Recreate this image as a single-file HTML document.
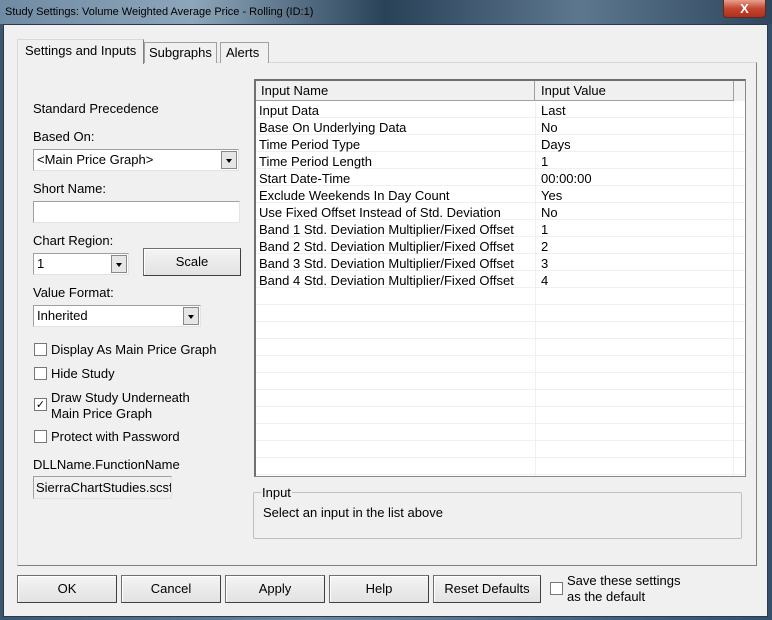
<!DOCTYPE html><html><head><style>
*{box-sizing:border-box;margin:0;padding:0}
body{width:772px;height:620px;overflow:hidden;position:relative;font:13px "Liberation Sans",sans-serif;color:#000;background:linear-gradient(90deg,#3c5670 0%,#6d879f 40%,#4d6884 70%,#34506c 100%)}
.a{position:absolute}
.t{position:absolute;white-space:nowrap;line-height:16px}
.title{left:0;top:0;width:772px;height:24px;background:linear-gradient(90deg,#6f8aa3,#8ea6ba 25%,#2a4258 50%,#5d778f 75%,#2e475f 100%);}
.client{left:3px;top:24px;width:765px;height:593px;background:#f0f0f0;border:1px solid #2a3a4a}
.btn{position:absolute;background:linear-gradient(#f4f4f4,#e2e2e2);border:1px solid #707070;border-right-color:#404040;border-bottom-color:#404040;text-align:center;line-height:25px;box-shadow:inset 1px 1px 0 #fff}
.edit{position:absolute;background:#fff;border:1px solid #a0a0a0;border-right-color:#e3e3e3;border-bottom-color:#e3e3e3;padding-left:3px;line-height:19px}
.dd{position:absolute;right:1px;top:1px;width:16px;bottom:1px;background:#e6e6e6;border:1px solid #888;}
.dd:after{content:"";position:absolute;left:4px;top:7px;border:3.5px solid transparent;border-top:4px solid #000}
.cb{position:absolute;width:13px;height:13px;background:#fff;border:1px solid #777;}
</style></head><body>
<div class="a title"></div>
<div class="t" style="left:5px;top:4px;font-size:11px;color:#000">Study Settings: Volume Weighted Average Price - Rolling (ID:1)</div>
<div class="a" style="left:723px;top:0;width:43px;height:18px;background:linear-gradient(#e8a090,#c4462e 50%,#b0301c);border:1px solid #5a2a24;border-top:none;border-radius:0 0 4px 4px;color:#fff;text-align:center;font:bold 13px/17px 'Liberation Sans'">X</div>
<div class="a client"></div>
<!-- tab panel -->
<div class="a" style="left:17px;top:62px;width:740px;height:504px;border:1px solid #898c95;border-top-color:#d9d9d9;border-left-color:#d9d9d9;border-right:1px solid #808080;border-bottom:1px solid #808080"></div>
<div class="a" style="left:144px;top:42px;width:73px;height:21px;border:1px solid #a0a0a0;border-bottom:none;background:#f0f0f0"></div>
<div class="t" style="left:149px;top:45px">Subgraphs</div>
<div class="a" style="left:220px;top:42px;width:49px;height:21px;border:1px solid #a0a0a0;border-bottom:none;background:#f0f0f0"></div>
<div class="t" style="left:226px;top:45px">Alerts</div>
<div class="a" style="left:17px;top:39px;width:127px;height:25px;border:1px solid #d9d9d9;border-right:1px solid #808080;border-bottom:none;background:#f0f0f0"></div>
<div class="t" style="left:25px;top:43px">Settings and Inputs</div>
<!-- left -->
<div class="t" style="left:33px;top:101px">Standard Precedence</div>
<div class="t" style="left:33px;top:129px">Based On:</div>
<div class="edit" style="left:33px;top:149px;width:206px;height:22px">&lt;Main Price Graph&gt;<div class="dd"></div></div>
<div class="t" style="left:33px;top:181px">Short Name:</div>
<div class="edit" style="left:33px;top:201px;width:207px;height:22px"></div>
<div class="t" style="left:33px;top:233px">Chart Region:</div>
<div class="edit" style="left:33px;top:253px;width:96px;height:22px">1<div class="dd"></div></div>
<div class="btn" style="left:143px;top:248px;width:98px;height:28px">Scale</div>
<div class="t" style="left:33px;top:285px">Value Format:</div>
<div class="edit" style="left:33px;top:305px;width:168px;height:22px">Inherited<div class="dd"></div></div>
<div class="cb" style="left:34px;top:343px"></div><div class="t" style="left:51px;top:342px">Display As Main Price Graph</div>
<div class="cb" style="left:34px;top:367px"></div><div class="t" style="left:51px;top:366px">Hide Study</div>
<div class="cb" style="left:34px;top:398px;font:bold 11px/11px 'DejaVu Sans';text-align:center">✓</div><div class="t" style="left:51px;top:390px">Draw Study Underneath</div><div class="t" style="left:51px;top:406px">Main Price Graph</div>
<div class="cb" style="left:34px;top:430px"></div><div class="t" style="left:51px;top:429px">Protect with Password</div>
<div class="t" style="left:33px;top:457px">DLLName.FunctionName</div>
<div class="a" style="left:33px;top:476px;width:139px;height:23px;border:1px solid #a0a0a0;border-right-color:#e3e3e3;border-bottom-color:#e3e3e3;background:#f0f0f0;overflow:hidden;padding-left:2px;line-height:21px;white-space:nowrap">SierraChartStudies.scsf</div>
<!-- list -->
<div class="a" style="left:254px;top:79px;width:492px;height:398px;border:1px solid #888;border-top:2px solid #707070;border-left:2px solid #707070;background:#fff"></div>
<div class="a" style="left:256px;top:101px;width:489px;height:375px;background:repeating-linear-gradient(#fff 0 16px,#f0f0f0 16px 17px)"></div>
<div class="a" style="left:535px;top:101px;width:1px;height:375px;background:#f0f0f0"></div>
<div class="a" style="left:733px;top:101px;width:1px;height:375px;background:#f0f0f0"></div>
<div class="a" style="left:256px;top:81px;width:477px;height:20px;background:#f0f0f0;border-bottom:1px solid #a0a0a0"></div>
<div class="a" style="left:733px;top:81px;width:12px;height:20px;background:#f0f0f0;border-left:1px solid #a0a0a0"></div>
<div class="a" style="left:534px;top:81px;width:1px;height:20px;background:#a0a0a0"></div>
<div class="t" style="left:261px;top:83px">Input Name</div>
<div class="t" style="left:541px;top:83px">Input Value</div>
<div class="a" style="left:259px;top:102px;line-height:17px">
Input Data<br>Base On Underlying Data<br>Time Period Type<br>Time Period Length<br>Start Date-Time<br>Exclude Weekends In Day Count<br>Use Fixed Offset Instead of Std. Deviation<br>Band 1 Std. Deviation Multiplier/Fixed Offset<br>Band 2 Std. Deviation Multiplier/Fixed Offset<br>Band 3 Std. Deviation Multiplier/Fixed Offset<br>Band 4 Std. Deviation Multiplier/Fixed Offset</div>
<div class="a" style="left:541px;top:102px;line-height:17px">Last<br>No<br>Days<br>1<br>00:00:00<br>Yes<br>No<br>1<br>2<br>3<br>4</div>
<!-- group -->
<div class="a" style="left:253px;top:492px;width:489px;height:47px;border:1px solid #c0c0c0;border-radius:2px"></div>
<div class="t" style="left:261px;top:485px;background:#f0f0f0;padding:0 1px">Input</div>
<div class="t" style="left:263px;top:505px">Select an input in the list above</div>
<!-- buttons -->
<div class="btn" style="left:17px;top:575px;width:100px;height:28px">OK</div>
<div class="btn" style="left:121px;top:575px;width:100px;height:28px">Cancel</div>
<div class="btn" style="left:225px;top:575px;width:100px;height:28px">Apply</div>
<div class="btn" style="left:329px;top:575px;width:100px;height:28px">Help</div>
<div class="btn" style="left:433px;top:575px;width:108px;height:28px">Reset Defaults</div>
<div class="cb" style="left:550px;top:582px"></div>
<div class="t" style="left:567px;top:573px">Save these settings</div>
<div class="t" style="left:567px;top:589px">as the default</div>
</body></html>
